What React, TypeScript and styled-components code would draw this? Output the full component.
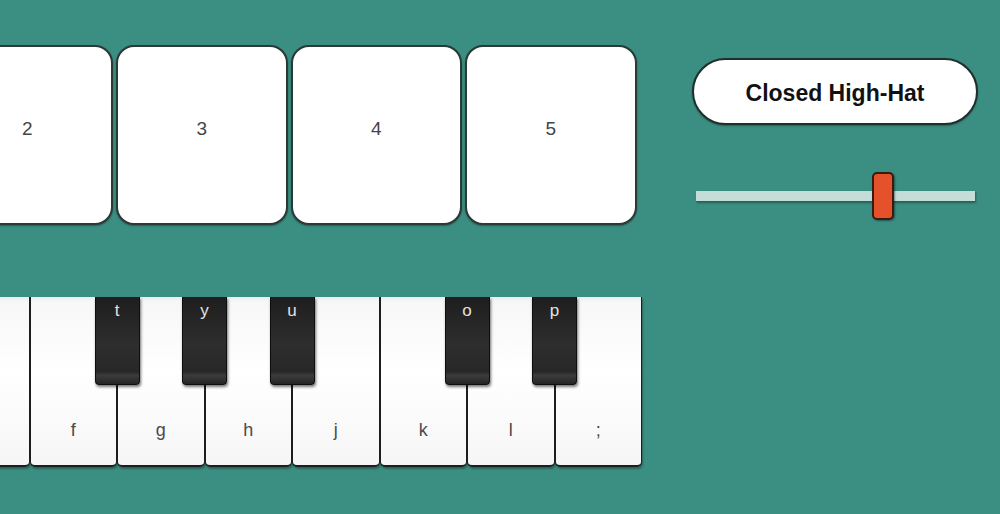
import React, { useState } from 'react'
import styled, { createGlobalStyle } from 'styled-components'

const pads = ['1', '2', '3', '4', '5']
const whiteKeys = ['a', 's', 'd', 'f', 'g', 'h', 'j', 'k', 'l', ';']
// black key letter and the white-key boundary it sits on
const blackKeys = [
  { key: 'w', at: 1 },
  { key: 'e', at: 2 },
  { key: 't', at: 4 },
  { key: 'y', at: 5 },
  { key: 'u', at: 6 },
  { key: 'o', at: 8 },
  { key: 'p', at: 9 },
]
const keyPitch = 87.5
const blackWidth = 45
const trackWidth = 279
const thumbWidth = 22

const App = () => {
  const [volume] = useState(0.685)

  return (
    <>
      <GlobalStyle />
      <Page>
        <MainColumn>
          <PadGrid>
            {pads.map(p => (
              <Pad key={p}>{p}</Pad>
            ))}
          </PadGrid>
          <Piano>
            {whiteKeys.map(k => (
              <WhiteKey key={k}>
                <WhiteLabel>{k}</WhiteLabel>
              </WhiteKey>
            ))}
            {blackKeys.map(b => (
              <BlackKey key={b.key} style={{ left: b.at * keyPitch - blackWidth / 2 }}>
                {b.key}
              </BlackKey>
            ))}
          </Piano>
        </MainColumn>
        <SidePanel>
          <SoundName>Closed High-Hat</SoundName>
          <SliderWrap>
            <Track>
              <Thumb style={{ left: volume * (trackWidth - thumbWidth) }} />
            </Track>
          </SliderWrap>
        </SidePanel>
      </Page>
    </>
  )
}

const GlobalStyle = createGlobalStyle`
  html, body {
    margin: 0;
    padding: 0;
    background: #3b8f82;
    overflow: hidden;
    font-family: "Liberation Sans", Arial, sans-serif;
  }
`

const Page = styled.div`
  display: flex;
  flex-direction: row;
  align-items: flex-start;
  gap: 50px;
  padding-top: 45px;
  margin-left: -233px;
  height: 469px;
`

const MainColumn = styled.div`
  display: flex;
  flex-direction: column;
  gap: 72px;
  flex-shrink: 0;
`

const PadGrid = styled.div`
  display: grid;
  grid-template-columns: repeat(5, 171.5px);
  gap: 3px;
`

const Pad = styled.div`
  box-sizing: border-box;
  height: 180px;
  padding-bottom: 13px;
  background: #fff;
  border: 2px solid #2c3a37;
  border-radius: 18px;
  box-shadow: 0 1px 2px rgba(0, 0, 0, 0.35);
  display: flex;
  align-items: center;
  justify-content: center;
  font-size: 19px;
  color: #454545;
`

const Piano = styled.div`
  position: relative;
  display: flex;
  width: 875px;
  height: 170px;
`

const WhiteKey = styled.div`
  box-sizing: border-box;
  flex: 1;
  height: 100%;
  background: linear-gradient(to bottom, #e9eeee 0, #f7f7f7 3%, #ffffff 45%, #f6f6f6 100%);
  border-left: 1.5px solid #1e1e1e;
  border-right: 1.5px solid #1e1e1e;
  border-bottom: 2px solid #1e1e1e;
  border-radius: 0 0 5px 5px;
  box-shadow: 1px 2px 2px rgba(0, 0, 0, 0.3);
  display: flex;
  flex-direction: column;
  justify-content: flex-end;
  align-items: center;
  padding-bottom: 25px;
`

const WhiteLabel = styled.span`
  font-size: 18px;
  line-height: 20px;
  color: #4a4a4a;
`

const BlackKey = styled.div`
  position: absolute;
  top: 0;
  box-sizing: border-box;
  width: 45px;
  height: 88px;
  background: linear-gradient(to bottom, #1e1e1e 0, #2e2e2e 55%, #272727 86%, #3c3c3c 90%, #252525 100%);
  border: 1.5px solid #0e0e0e;
  border-top: none;
  border-radius: 0 0 4px 4px;
  box-shadow: 1px 2px 3px rgba(0, 0, 0, 0.55);
  color: #e2e2e2;
  font-size: 17px;
  text-align: center;
  padding-top: 4px;
  line-height: 20px;
`

const SidePanel = styled.div`
  display: flex;
  flex-direction: column;
  width: 286px;
  margin-top: 13px;
  flex-shrink: 0;
`

const SoundName = styled.div`
  box-sizing: border-box;
  height: 67px;
  padding-top: 3px;
  background: #fff;
  border: 2px solid #1f2f2c;
  border-radius: 34px;
  box-shadow: 0 1px 2px rgba(0, 0, 0, 0.35);
  display: flex;
  align-items: center;
  justify-content: center;
  font-size: 23px;
  font-weight: 700;
  color: #111;
`

const SliderWrap = styled.div`
  display: flex;
  align-items: center;
  height: 48px;
  margin-top: 47px;
  padding-left: 4px;
`

const Track = styled.div`
  position: relative;
  width: 279px;
  height: 10px;
  background: #c4ddd8;
  border-bottom: 1px solid #2b5f56;
  box-shadow: 1px 1px 2px rgba(0, 0, 0, 0.35);
`

const Thumb = styled.div`
  position: absolute;
  top: -19px;
  box-sizing: border-box;
  width: 22px;
  height: 48px;
  background: #e4512a;
  border: 2px solid #3b1a0f;
  border-radius: 5px;
  box-shadow: 1px 1px 2px rgba(0, 0, 0, 0.4);
`

export default App
